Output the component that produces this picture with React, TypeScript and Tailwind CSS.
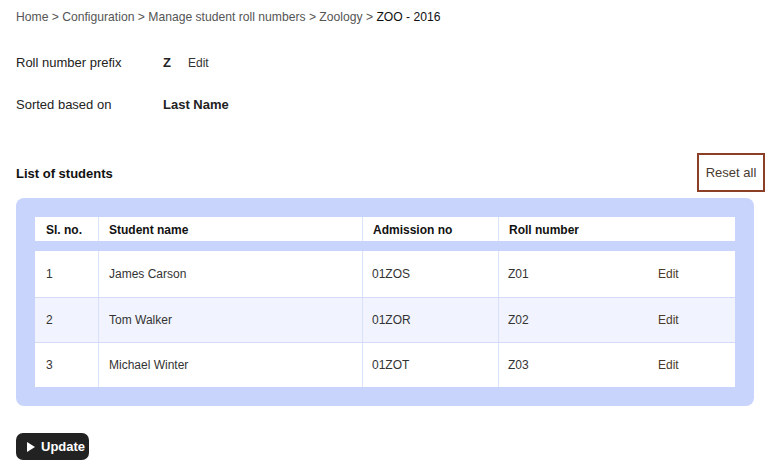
import React from 'react';

const students = [
  { no: 1, name: 'James Carson', admission: '01ZOS', roll: 'Z01' },
  { no: 2, name: 'Tom Walker', admission: '01ZOR', roll: 'Z02' },
  { no: 3, name: 'Michael Winter', admission: '01ZOT', roll: 'Z03' },
];

const cols = 'grid grid-cols-[63px_264px_136px_237px]';

const App: React.FC = () => {
  return (
    <div className="min-h-[474px] bg-white pl-4 pr-[3px] pt-[9px] font-['Liberation_Sans',Arial,sans-serif] text-[#222]">
      {/* Breadcrumb */}
      <div className="text-[12.15px] leading-4 text-[#555]">
        Home &gt; Configuration &gt; Manage student roll numbers &gt; Zoology &gt;{' '}
        <span className="text-[#111]">ZOO - 2016</span>
      </div>

      {/* Settings */}
      <div className="mt-[28px] flex h-5 items-center text-[13px]">
        <span className="w-[147px]">Roll number prefix</span>
        <span className="font-bold">Z</span>
        <span className="ml-[17px] text-[12px] text-[#333]">Edit</span>
      </div>
      <div className="mt-[22px] flex h-5 items-center text-[13px]">
        <span className="w-[147px]">Sorted based on</span>
        <span className="font-bold">Last Name</span>
      </div>

      {/* List header */}
      <div className="mt-[38px] flex h-[39px] items-center justify-between">
        <span className="pt-[2px] text-[13px] font-bold text-[#111]">List of students</span>
        <button className="h-[39px] w-[68px] border-2 border-[#8a3f26] bg-white text-[13px] text-[#4a3a30]">
          Reset all
        </button>
      </div>

      {/* Table panel */}
      <div className="mt-[6px] w-[738px] rounded-lg bg-[#c9d4fc] p-[19px]">
        <div className={`${cols} h-6 items-center bg-white text-[12px] font-bold text-[#111]`}>
          <div className="pl-[11px] pt-[1px]">Sl. no.</div>
          <div className="flex h-full items-center border-l border-[#dbe3fb] pl-[10px] pt-[1px]">Student name</div>
          <div className="flex h-full items-center border-l border-[#dbe3fb] pl-[10px] pt-[1px]">Admission no</div>
          <div className="flex h-full items-center border-l border-[#dbe3fb] pl-[10px] pt-[1px]">Roll number</div>
        </div>
        <div className="mt-[10px] bg-white text-[12px] text-[#333]">
          {students.map((s, i) => (
            <div
              key={s.no}
              className={`${cols} ${i === 0 ? 'h-[46px]' : 'h-[45px] border-t border-[#d3dbf7]'} ${i === 1 ? 'bg-[#f1f4fe]' : 'bg-white'}`}
            >
              <div className="flex items-center pl-[11px]">{s.no}</div>
              <div className="flex items-center border-l border-[#d8e0fa] pl-[10px]">{s.name}</div>
              <div className="flex items-center border-l border-[#d8e0fa] pl-[9px]">{s.admission}</div>
              <div className="flex items-center border-l border-[#d8e0fa] pl-[9px]">
                <span className="w-[150px]">{s.roll}</span>
                <span className="text-[#4a3a2a]">Edit</span>
              </div>
            </div>
          ))}
        </div>
      </div>

      {/* Update */}
      <button className="mt-[27px] flex h-[27px] w-[73px] items-center gap-[6px] rounded-[7px] bg-[#222] pl-[11px] text-[13px] font-bold text-white">
        <svg width="8" height="10" viewBox="0 0 8 10">
          <path d="M0 0 L8 5 L0 10 Z" fill="white" />
        </svg>
        Update
      </button>
    </div>
  );
};

export default App;
